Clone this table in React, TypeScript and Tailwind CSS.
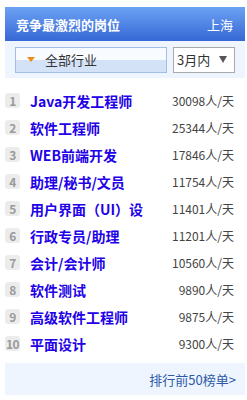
const jobs: [string, string][] = [
  ['Java开发工程师', '30098人/天'],
  ['软件工程师', '25344人/天'],
  ['WEB前端开发', '17846人/天'],
  ['助理/秘书/文员', '11754人/天'],
  ['用户界面（UI）设', '11401人/天'],
  ['行政专员/助理', '11201人/天'],
  ['会计/会计师', '10560人/天'],
  ['软件测试', '9890人/天'],
  ['高级软件工程师', '9875人/天'],
  ['平面设计', '9300人/天'],
];

const font = { fontFamily: '"Noto Sans CJK SC", "Liberation Sans", sans-serif' };

export default function App() {
  return (
    <div className="w-[247px] h-[400px] bg-white overflow-hidden" style={font}>
      <div className="ml-[5px] mt-[7px] w-[240px]">
        {/* header */}
        <div className="h-[34px] flex items-center justify-between pl-[11px] pr-[12px] bg-[linear-gradient(#6ca2f3,#3668d6)]">
          <span className="text-white text-[13px] font-bold leading-none">竞争最激烈的岗位</span>
          <span className="text-white text-[13px] leading-none">上海</span>
        </div>

        {/* filters */}
        <div className="h-[37px] bg-[#eef5fe] flex items-center pl-[10px] gap-[6px]">
          <div className="w-[152px] h-[26px] border border-[#a3bde6] bg-[linear-gradient(#f8fbff_50%,#d3e2f6_50%)] flex items-center">
            <span className="ml-[11px] w-0 h-0 border-l-[4px] border-r-[4px] border-t-[5px] border-l-transparent border-r-transparent border-t-[#f28a1a]" />
            <span className="ml-[10px] text-[13px] text-[#333] leading-none">全部行业</span>
          </div>
          <div className="w-[62px] h-[26px] border border-[#a8a8a8] bg-white flex items-center justify-between pl-[3px] pr-[7px]">
            <span className="text-[13px] text-[#333] leading-none">3月内</span>
            <span className="w-0 h-0 border-l-[4px] border-r-[4px] border-t-[7px] border-l-transparent border-r-transparent border-t-[#555]" />
          </div>
        </div>

        {/* list */}
        <ul className="pt-[9px]">
          {jobs.map(([title, count], i) => (
            <li key={title} className="h-[27px] flex items-center">
              <span className="w-[15px] h-[15px] rounded-[3px] bg-[#ececec] text-[#9a9a9a] text-[12px] font-bold flex items-center justify-center leading-none tracking-[-0.5px]">
                {i + 1}
              </span>
              <span className="ml-[10px] text-[14px] font-bold text-[#2200e8] leading-none whitespace-nowrap">{title}</span>
              <span className="ml-auto mr-[11px] text-[12px] text-[#444] leading-none">{count}</span>
            </li>
          ))}
        </ul>

        {/* footer */}
        <div className="mt-[6px] h-[32px] bg-[#eef5fe] flex items-center justify-end pr-[9px]">
          <span className="text-[13px] text-[#2d5aa6] leading-none">排行前50榜单&gt;</span>
        </div>
      </div>
    </div>
  );
}
